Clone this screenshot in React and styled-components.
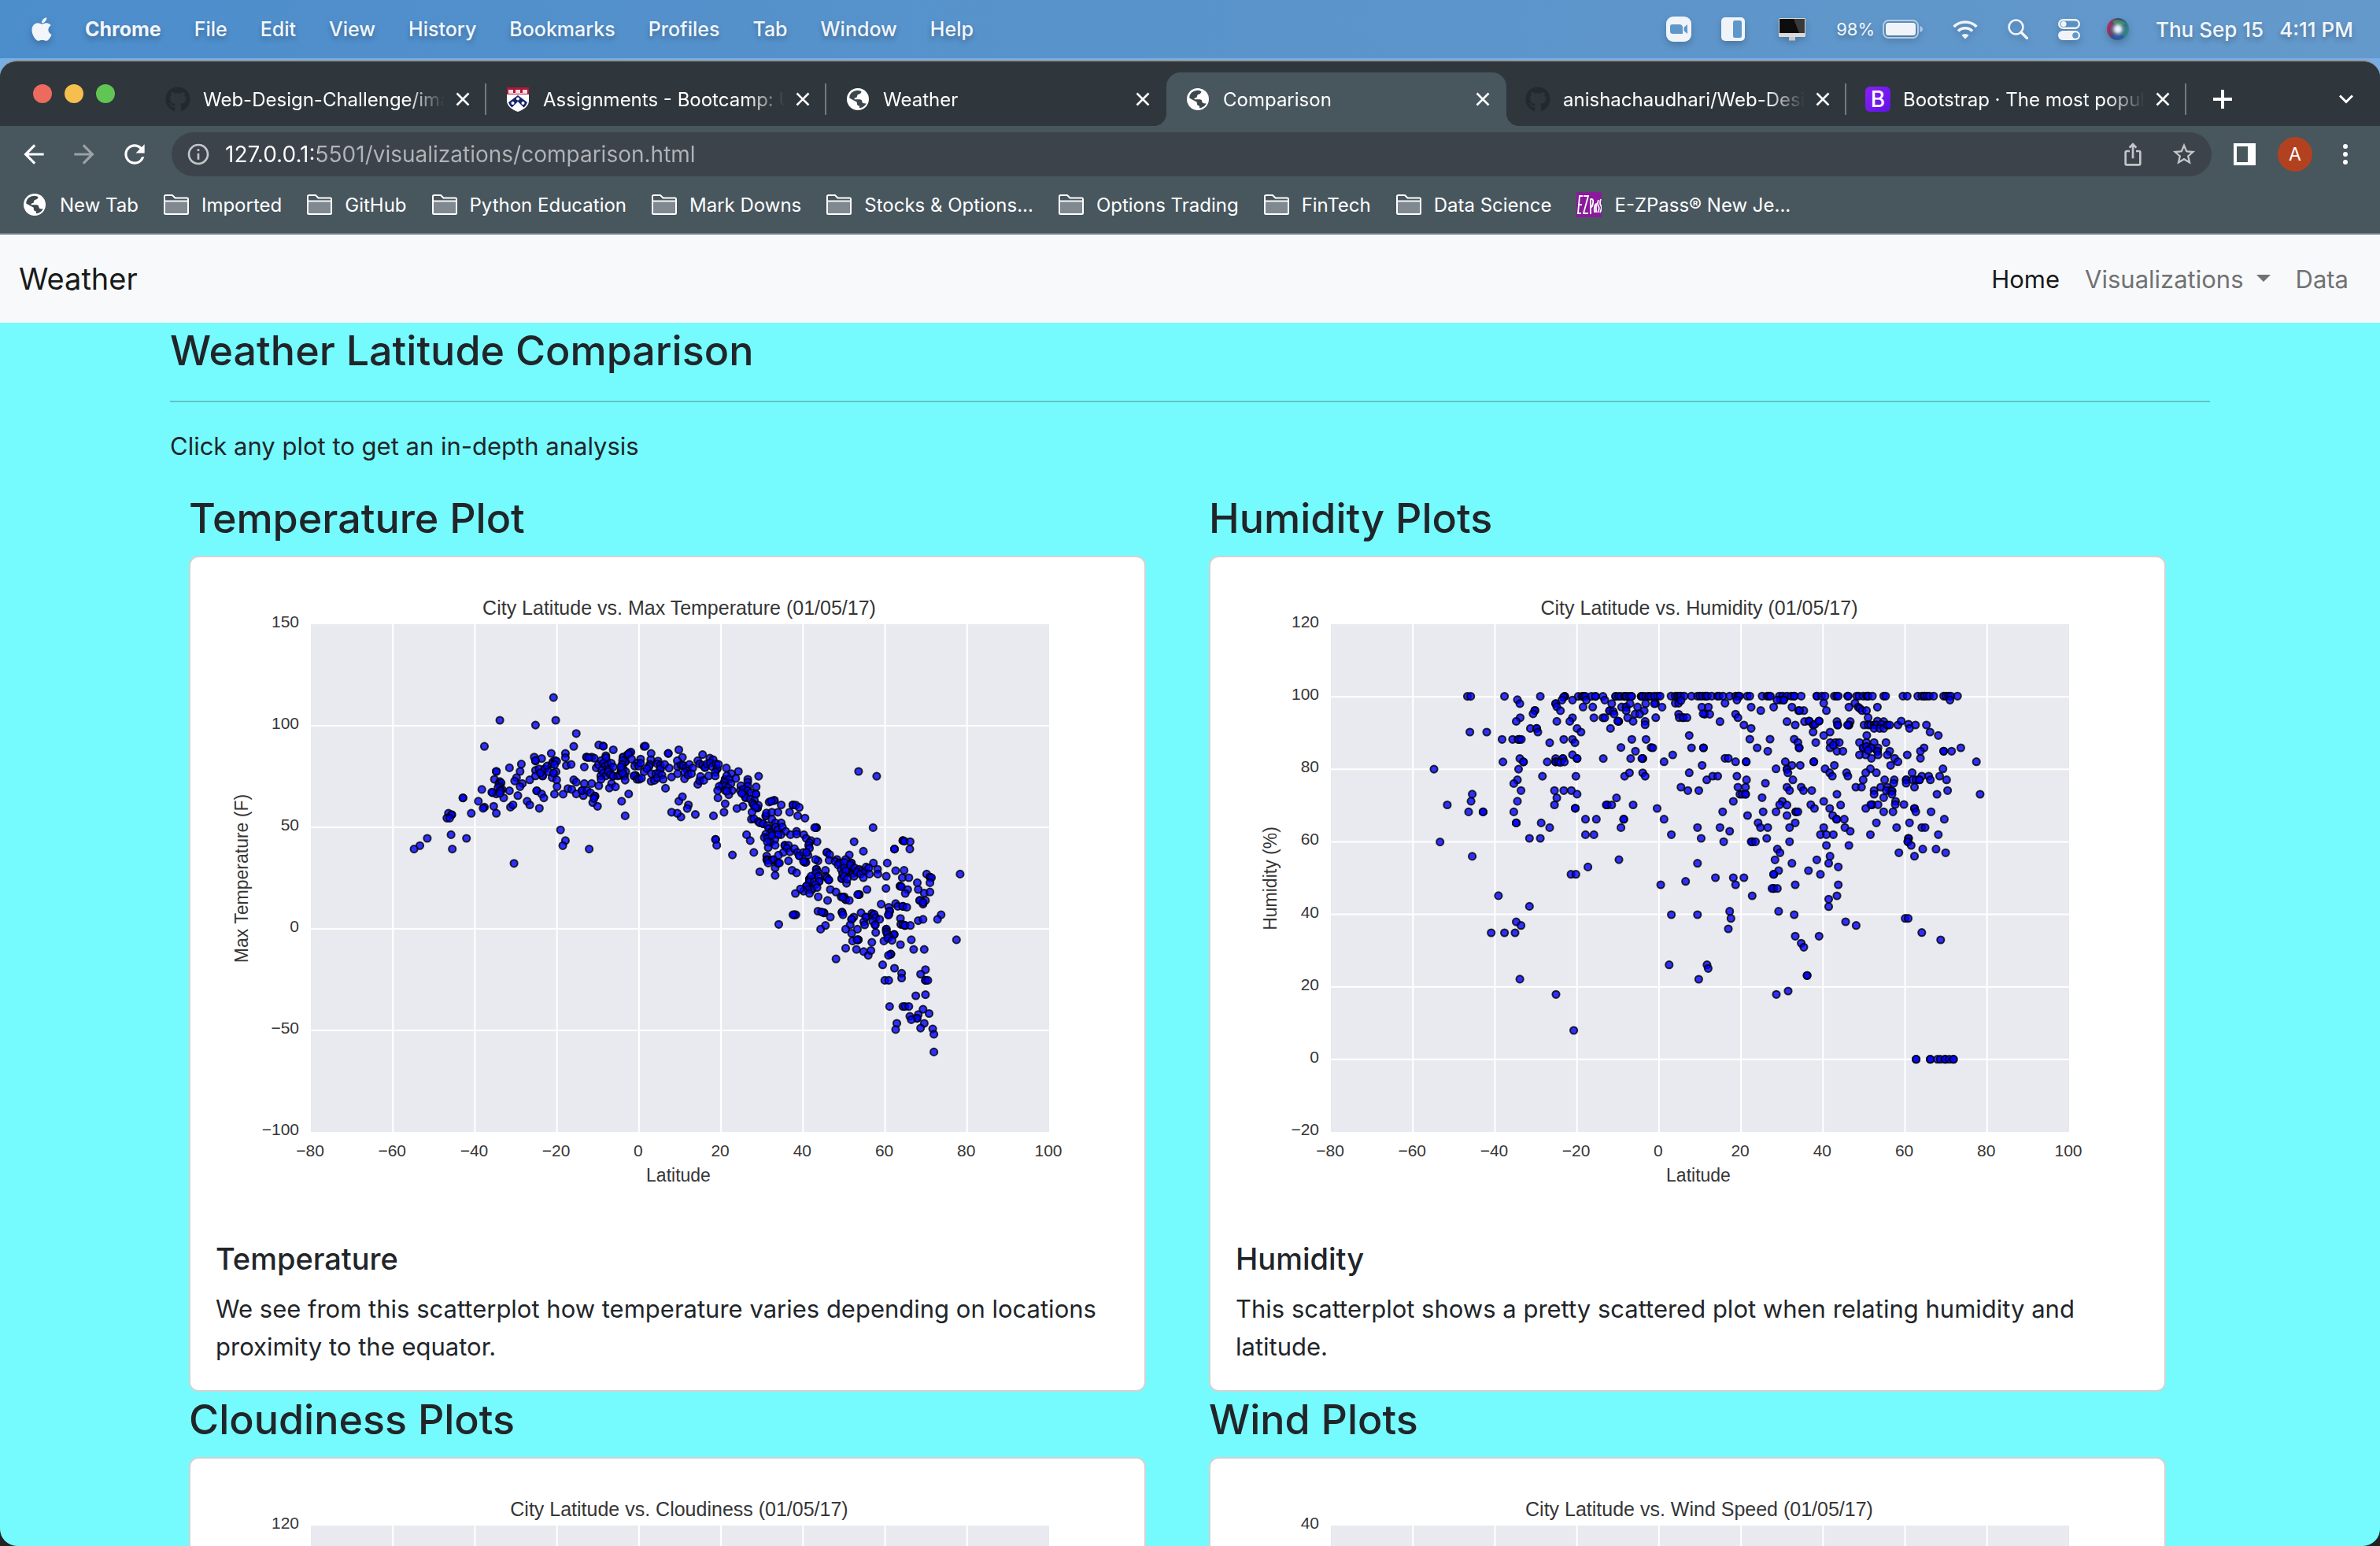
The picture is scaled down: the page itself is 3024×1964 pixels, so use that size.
import React from "react";
import styled, { createGlobalStyle, css } from "styled-components";
import { FaApple, FaGithub } from "react-icons/fa";
import {
  MdArrowBack,
  MdArrowForward,
  MdInfoOutline,
  MdIosShare,
  MdRefresh,
  MdStarBorder,
} from "react-icons/md";

const GlobalStyle = createGlobalStyle`
  *, *::before, *::after { box-sizing: border-box; }
  html, body, #root { height: 100%; }
  body {
    margin: 0;
    background: #222;
    font-family: Inter, "Noto Sans", sans-serif;
    overflow: hidden;
  }
  button, input { font: inherit; color: inherit; }
  button { border: 0; padding: 0; background: none; cursor: pointer; }
  a { color: inherit; text-decoration: none; }
  h1, h2, h3, p { margin: 0; }
  svg { display: block; flex: none; }
`;

/* ---------- Scatter plot data ---------- */

// Each block lists "x,y" marks on its own grid; `origin` and `scale` map
// the grid to chart units. A trailing "*" is a mark plotted twice.
const temperatureBlocks = [
  {
    origin: [-2, -8],
    scale: [2.45, 2.8],
    marks: `1135,521 968,602 1142,602 1079,619 1206,649 920,695 1198,695 1276,690 1290,694* 1321,707 1417,695
      1128,720 1172,720 1172,735 1075,733 1098,738 1079,747 1035,758 998,771 957,784* 951,812 1031,784 1020,806 1014,818
      1038,827 1031,838 1061,814 912,848 998,853 1024,870 980,878 1053,890 1061,903 1083,853* 1098,864 1105,878 1091,915
      1001,911 1009,903 957,933 949,908 920,911 916,915 901,890 879,933 853,878* 808,933 818,938* 803,950 812,950 816,1009
      864,1022 820,1060 742,1022 719,1048 701,1060 1012,1111 968,820 965,828 972,825 968,838 962,842 975,848 945,860
      957,864 970,853* 968,862 943,858 1079,745 1079,780 1079,800 1090,775 1108,775* 1101,800* 1094,790 1115,765 1120,785
      1130,758 1133,750 1140,745 1145,748 1138,760 1143,785 1131,806 1145,814 1135,790 1146,838 1138,865 1165,865 1180,845
      1192,848 1206,864 1198,814 1206,822 1231,827 1254,827 1228,870 1224,852* 1240,852 1250,860 1264,872* 1257,895
      1272,908 1276,835 1261,880 1238,733* 1254,733 1231,768 1175,763 1190,759 1262,737 1245,735 1268,771 1275,760
      1284,745 1298,728 1300,745 1298,735 1290,755 1296,765 1305,760 1309,775 1315,755 1321,768 1285,780 1282,800
      1290,790 1298,800 1283,812 1305,785 1312,795 1320,800* 1335,800 1345,785 1342,798 1316,827 1309,843 1328,839
      1352,733* 1358,750* 1365,725 1372,718 1376,715 1368,722 1350,745 1348,760 1352,775 1346,780 1360,785 1355,800*
      1358,815 1350,790 1345,768 1378,740 1406,740 1395,755 1388,765 1400,765 1406,755 1390,798* 1385,800 1395,812
      1402,812 1409,808 1417,785 1369,864 1347,890 1358,942 1157,992 1172,1030 1164,1048 1246,1060`,
  },
  {
    origin: [578, 132],
    scale: [2.6133, 2.8],
    marks: `0,302 19,328 18,350 15,367 12,375 5,382 20,400 19,427 30,424 35,400 42,355 40,365 50,370 50,383* 45,400 40,415
      55,405 59,420 64,367 79,380 87,412 67,452 76,328* 111,315 123,342 106,354 107,375 107,400 118,370 126,371* 135,380
      140,388 146,367 157,380 130,395 130,418 142,405 153,400 174,438 180,425 183,410 194,424 210,408 190,332 174,354
      180,365 190,370 198,378* 205,365 214,345 225,350 215,362 222,375 235,365 238,383* 243,367 232,395 232,408 269,380
      309,392 376,409 286,400 300,417 265,420* 270,408 278,420 284,435 262,430 255,440 265,445 275,450 245,445 240,460
      241,486 265,460 288,460 277,475 270,462 317,443 340,420 340,430 340,445 315,460 325,455 340,460 350,468 368,447
      367,473* 328,475 333,485* 320,470 348,490 362,495 356,505 372,522* 375,512 360,512 365,520 324,516 304,524 265,507
      261,537 226,550 166,545 118,554 106,541 87,537 111,498 123,482 143,511 139,524 354,537 352,562 360,560 375,570
      380,575 391,578* 400,550* 402,540 420,537 440,537 428,495* 411,501 418,498 451,511 490,511* 500,512 511,520 479,537
      506,550 530,558 420,562 432,575 451,575 405,585 410,595 420,605* 432,590 440,600 455,590 466,605 450,617 440,617
      415,612 400,615 395,627 405,630 430,635 420,620 415,645 405,643 408,663 431,655 482,617 502,605 502,615 526,617
      534,630 550,638 570,642 545,645 542,655 545,665 463,655* 475,655 470,665 458,680 480,678 495,667 505,680 511,692*
      525,680 540,690 535,680 530,715* 533,715 525,712 360,680 348,638 336,617 289,689 233,634* 237,655 380,749 431,762
      431,735 403,693 403,705 405,708* 420,708 426,705 440,718* 445,718 442,690 408,718 475,710 487,744 502,753 568,592*
      562,592 603,680* 612,688 610,708 573,710 565,705 598,744 568,740* 572,750 565,755 575,765 598,765 603,770 609,778*
      545,775* 550,765 545,785* 560,785 577,783* 565,795 553,812* 535,800* 540,812 525,818 515,810 498,826 545,826
      570,805 574,838 614,812 633,821 605,851 650,838 660,838 665,848* 677,851 655,840 710,830* 705,830 736,812 573,889
      593,895* 585,892 614,910 598,940 582,953 495,902* 500,902 490,902 443,936 653,893* 656,902 716,895 692,910 685,918*
      680,938 665,953 704,953 685,968 688,995 707,991* 703,991 665,1021 701,1025 725,1033 740,1046 749,1029 752,1000
      633,1059 732,910* 725,927 728,938 752,897 755,905 760,900 765,912 778,918 755,925 763,938* 765,965 783,864 808,875
      808,900* 811,889* 807,903 831,862 838,872 855,872* 868,875 847,915 848,936 855,937 862,940* 880,940 906,923 922,918
      982,902 970,918 800,953* 800,962 803,970 826,972* 810,980 792,995 805,985 819,993 847,1008 883,991 891,1025
      926,1025 1033,991 1045,757 708,392 768,409 756,592 693,642 724,676 677,689 827,668* 855,638* 860,640 879,642
      878,668 803,718 757,718 636,705 630,712 645,718* 640,725 665,705 660,715 684,718* 680,725 650,740 660,735 672,748*
      655,755 665,745 652,773* 660,765 668,790 670,775 690,755 693,765 700,745* 695,735 710,740 703,750 720,745 715,757
      724,770 730,745 733,732 742,735 744,757 771,740 772,757 800,765 831,745 859,744 853,770 875,770 934,757 945,768*
      950,770 945,788 903,788 906,812 926,825 945,821 930,851 911,851* 922,864 922,858 846,800* 850,802 871,812 863,826
      799,808 815,1042* 807,1046 788,1080 827,1092 851,1110 851,1127 930,1097 914,1113 930,1135* 938,1135 795,1135
      808,1135 898,1190 930,1186 811,1228 855,1228 862,1228 875,1228 922,1238 942,1253 878,1263 906,1257 902,1270*
      883,1275 926,1288 914,1305 835,1288 831,1310 954,1308 958,1327 958,1390`,
  },
];

const humidityBlocks = [
  {
    origin: [2, -8],
    scale: [2.6133, 2.8],
    marks: `848,517 859,517 971,517 1090,517 1171,517* 1167,520 1162,530 1197,530 1216,517 1228,517 1234,517* 1240,517
      1243,530 1260,517 1273,517* 1298,517 1304,530 1340,517* 1350,517 1358,517 1370,517* 1375,517* 1385,517 1393,517*
      1425,517* 1430,517* 1440,517 1450,517* 1458,517 1014,529 1022,543 1072,567* 1066,579 1141,543* 1145,554 1157,568
      1232,555 1264,555 1327,543 1320,568* 1332,570 1335,580 1360,555 1375,555* 1388,543 1375,568 1413,555 1435,568
      1440,543 1405,580 1420,580 1268,593 1298,593 1304,593 1197,593 1188,606 1145,606 1023,593 1010,606 1350,606*
      1347,605 1380,593 1398,606 1438,606 1438,618 1323,631 1057,631 1078,631* 1082,644 1212,631 1225,644 856,644 912,644
      963,670 998,670 1020,670* 1016,670 1027,670 1121,682 1168,670 1197,670 1205,682 1394,670 1441,670 1358,699 1406,712
      1458,699 1390,738 1430,738* 1427,738 1299,738 1197,725 1212,738* 1141,738 1165,738* 1113,750 1141,750* 1150,750
      1157,752 1170,750 966,750 1022,738 1034,750* 1018,776 737,776 1097,801 1208,801 1370,801 1386,789 1430,789 1438,801
      1014,814 1002,827 1026,852 1014,890 1137,852 1168,852 1193,852 1212,865 1145,878 1137,903 864,865 860,890 852,928
      900,928* 781,903 1002,928 1010,967* 1093,967 1121,984 1206,915* 1240,954 1276,954 1240,1009 1268,1009 1312,903*
      1309,903 1327,903 1343,878 1398,903 1367,954* 1358,984 1054,1022 1090,1022 757,1035 864,1086 1351,1098 1248,1124
      1192,1150 1208,1150 951,1226 1054,1264 1010,1319 1026,1332 927,1358 971,1358 1006,1358 1022,1523`,
  },
  {
    origin: [562, 112],
    scale: [2.3758, 3],
    marks: `5,193 15,193 22,193 55,193 68,193 75,193 80,193 85,193 95,193 117,193 135,193 142,193 150,193 160,193* 165,193
      178,193 195,193 200,193 212,193 232,193 250,193 258,193* 262,193 285,193 293,193 330,193 345,193 350,193 355,193
      382,193 392,193 405,193 418,193 427,193* 448,193 495,193* 510,193 520,193 548,193 555,193 560,193 588,193 590,193
      615,193 622,193 635,193 645,193 650,193* 663,193 697,193 703,193 755,193 768,193 800,193 812,193 820,193* 828,193
      835,193 848,193 878,193 885,193 893,193 900,193 920,193 8,220 5,222 28,235 68,220 78,220 85,210 254,208 218,220
      385,208 395,208* 375,208 516,220 524,248 610,220 592,235 620,235 625,240 632,248 645,248 678,235 897,208 650,275
      148,235 168,235 157,262 172,262 152,260 78,262 80,275 92,275* 103,275 9,275 203,290 250,262 257,275 275,303 297,316
      297,235 326,248 365,235 420,235 440,248 456,248 443,248 405,290 430,303 458,290 472,288* 485,303* 490,300 502,288*
      484,330 556,290 558,303* 596,290 592,303* 588,303 535,330 516,343 678,288 697,290 638,303 650,303 658,303 668,303
      675,303* 690,300 668,316 685,316 697,316 708,303* 715,303 740,303 750,288 772,300 793,303 775,316 826,303 837,330
      862,343 110,343 293,357 354,357 427,357 438,370 442,390* 492,370 536,370 552,370 563,370 535,390 545,380 556,403
      574,403 646,343 624,370 645,370 668,370 704,370 635,390* 645,385 660,390* 680,390 678,403* 624,417 643,417 650,400
      680,417 660,430 715,403 708,417 730,430 740,443 718,457 768,417 819,390 808,403 808,430 878,403* 902,403 930,390
      977,443 988,567 0,390 117,390 153,390* 60,417 34,443 315,390 347,403 218,430 228,430 250,443 282,443* 149,457
      110,485 372,470 400,443 420,457 445,457 405,472* 408,485 423,512 486,443* 520,470 534,485 542,498 548,457 585,485
      589,498 657,470 643,485 675,485 876,470 783,485 866,498 887,512 812,498 833,498 838,512 765,512* 765,525 785,512
      795,512 805,512* 790,540 840,634 858,567 890,553 163,512 181,498 196,498 254,498 283,512 340,525 85,540 106,553
      139,553 257,540 280,540 263,567 270,567 280,567* 243,594 330,580 405,540 413,553 448,540 455,553 480,553 556,567
      516,594 567,608 635,512 613,540 630,540 700,512 729,512 727,525 688,540 668,553 668,567 708,540 715,553 705,553
      722,555* 697,580 722,567 733,594 732,606 758,606 391,594 383,607 405,608 477,607 488,621 534,621 543,648 555,662*
      578,662 580,694 596,708 662,607* 658,607 680,607 643,621 697,634 725,634 790,621* 794,634 880,662 675,676 736,694
      775,676 812,694 822,694 862,721 13,621 34,662 211,634 286,648 333,634 372,634 405,648 432,634* 438,634 318,676
      325,694 347,694 413,694 430,676 135,694 203,694 232,708 56,721 146,735 214,748 300,748* 297,748 310,748 344,735
      413,748 516,694 506,721 524,721 545,721 524,762 592,762 657,721 772,735* 770,748* 780,762 743,790 790,803 815,776
      855,776 884,790 376,776 384,790 369,817 420,830 495,817 535,803 531,830 560,844 470,858 506,872 380,858 365,872*
      135,830 99,899 189,885 243,885 275,885 250,912 24,912 300,954 365,926* 360,926 376,926 430,912 560,912 556,954
      531,967 531,995 232,1013 236,1040 228,1080 56,1026 135,1026 380,1013 427,1026 582,1053 614,1067 762,1040 771,1040
      812,1094 869,1122 430,1108 502,1108 448,1135 456,1150`,
  },
  {
    origin: [62, 392],
    scale: [1.3288, 3],
    marks: `692,377 756,377 758,391 742,432 925,418* 501,490 893,477 873,490 531,627 1109,737* 1133,737* 1145,737 1150,737
      1158,737* 1165,737 1172,737*`,
  },
];

function readMarks(blocks) {
  return blocks.flatMap(({ origin, scale, marks }) =>
    marks.trim().split(/\s+/).flatMap((mark) => {
      const [x, y] = mark.replace("*", "").split(",").map(Number);
      const point = [
        Math.round((x / scale[0] + origin[0]) * 10) / 10,
        Math.round((y / scale[1] + origin[1]) * 10) / 10,
      ];
      return mark.endsWith("*") ? [point, point] : [point];
    })
  );
}

const axis = { left: 153, right: 1091, top: 85, bottom: 730 };
const latitudes = [-80, -60, -40, -20, 0, 20, 40, 60, 80, 100];
const signed = (n) => String(n).replace("-", "−");

const plots = [
  {
    heading: "Temperature Plot",
    chart: "City Latitude vs. Max Temperature (01/05/17)",
    yLabel: "Max Temperature (F)",
    yLabelX: 73,
    range: [-100, 150],
    step: 50,
    points: readMarks(temperatureBlocks),
    title: "Temperature",
    text: "We see from this scatterplot how temperature varies depending on locations proximity to the equator.",
  },
  {
    heading: "Humidity Plots",
    chart: "City Latitude vs. Humidity (01/05/17)",
    yLabel: "Humidity (%)",
    yLabelX: 84,
    range: [-20, 120],
    step: 20,
    points: readMarks(humidityBlocks),
    title: "Humidity",
    text: "This scatterplot shows a pretty scattered plot when relating humidity and latitude.",
  },
  {
    heading: "Cloudiness Plots",
    chart: "City Latitude vs. Cloudiness (01/05/17)",
    range: [-20, 120],
    step: 20,
    points: [],
  },
  {
    heading: "Wind Plots",
    chart: "City Latitude vs. Wind Speed (01/05/17)",
    range: [-5, 40],
    step: 5,
    points: [],
  },
];

/* ---------- Menu bar ---------- */

const Desktop = styled.div`
  display: flex;
  flex-direction: column;
  height: 100vh;
  background: linear-gradient(#79aee4 0 200px, #222 200px);
`;

const MenuBar = styled.header`
  display: flex;
  align-items: center;
  justify-content: space-between;
  flex: none;
  height: 74px;
  padding: 0 34px 0 40px;
  background: linear-gradient(90deg, #4c8dcc, #5893cb 45%, #6499cb);
  color: #f2f6fa;
  font-size: 25px;
  white-space: nowrap;
  text-shadow: 0 4px 6px rgba(0, 0, 0, 0.25);

  svg {
    filter: drop-shadow(0 4px 4px rgba(0, 0, 0, 0.2));
  }
`;

const MenuGroup = styled.div`
  display: flex;
  align-items: center;
  gap: ${(p) => p.$gap}px;
`;

const MenuItem = styled.button`
  font-weight: ${(p) => (p.$bold ? 700 : 500)};
  text-shadow: inherit;
`;

const AppleLogo = styled(FaApple)`
  width: 26px;
  height: 34px;
`;

const Clock = styled.button`
  display: flex;
  gap: 20px;
  font-size: 26px;
  font-weight: 500;
  text-shadow: inherit;
`;

const BatteryText = styled.span`
  font-size: 22px;
`;

const menus = ["File", "Edit", "View", "History", "Bookmarks", "Profiles", "Tab", "Window", "Help"];

const ZoomIcon = () => (
  <svg width="32" height="32" viewBox="0 0 32 32">
    <rect width="32" height="32" rx="9" fill="#f0f4f9" />
    <path d="M5 12.500a2.500 2.500 0 0 1 2.500-2.500h10a4 4 0 0 1 3.500 4v8h-12.500a3.500 3.500 0 0 1-3.500-3.500zM22.500 14l4.500-4v12l-4.500-4z" fill="#5f97cb" />
  </svg>
);

const SidebarIcon = () => (
  <svg width="30" height="30" viewBox="0 0 30 30">
    <rect width="30" height="30" rx="5" fill="#f0f4f9" />
    <rect x="15" y="4" width="11" height="22" rx="2.500" fill="#5f97cb" />
  </svg>
);

const DisplayIcon = () => (
  <svg width="40" height="30" viewBox="0 0 40 30">
    <rect x="5" y="1" width="34" height="24" rx="1.500" fill="#d9d9db" />
    <rect x="6" y="2" width="32" height="18" fill="#0d0d0d" />
    <path d="M24 2h14v18h-7z" fill="#3a3a3a" />
    <path d="M18 25h8v4.500h-8z" fill="#c9c9cc" />
  </svg>
);

const BatteryIcon = () => (
  <svg width="51" height="24" viewBox="0 0 51 24">
    <rect x="1" y="1" width="44" height="22" rx="6.500" fill="none" stroke="#b4cbe3" strokeWidth="2" />
    <rect x="4" y="4" width="38" height="16" rx="3.500" fill="#f0f4f9" />
    <path d="M47.500 8c2.500 1 3.500 2.500 3.500 4s-1 3-3.500 4z" fill="#b4cbe3" />
  </svg>
);

const WifiIcon = () => (
  <svg width="32" height="25" viewBox="0 0 32 25" fill="none" stroke="#f0f4f9" strokeWidth="3.600">
    <path d="M1.500 9a20.500 20.500 0 0 1 29 0" />
    <path d="M7 14.500a12.800 12.800 0 0 1 18 0" />
    <path d="M16 24.500l-4.600-4.700a6.500 6.500 0 0 1 9.200 0z" fill="#f0f4f9" stroke="none" />
  </svg>
);

const SearchIcon = () => (
  <svg width="26" height="26" viewBox="0 0 26 26" fill="none" stroke="#f0f4f9" strokeWidth="2.600">
    <circle cx="10.500" cy="10.500" r="9" />
    <path d="M17 17l7.500 7.500" strokeWidth="3.400" strokeLinecap="round" />
  </svg>
);

const ControlIcon = () => (
  <svg width="28" height="27" viewBox="0 0 28 27">
    <rect x="1.200" y="1.200" width="25.600" height="10.600" rx="5.300" fill="none" stroke="#f0f4f9" strokeWidth="2.400" />
    <circle cx="7" cy="6.500" r="3.600" fill="#f0f4f9" />
    <rect y="15" width="28" height="12" rx="6" fill="#f0f4f9" />
    <circle cx="22" cy="21" r="3.800" fill="#5f97cb" />
  </svg>
);

const SiriIcon = () => (
  <svg width="28" height="28" viewBox="0 0 28 28">
    <defs>
      <radialGradient id="siriGlow">
        <stop offset="0" stopColor="#fff" />
        <stop offset="0.350" stopColor="#e6eef8" stopOpacity="0.850" />
        <stop offset="1" stopColor="#3b5f92" stopOpacity="0" />
      </radialGradient>
      <linearGradient id="siriBall" x1="0" x2="1" y1="0.300" y2="0.600">
        <stop offset="0" stopColor="#c02a5c" />
        <stop offset="0.450" stopColor="#3d4a70" />
        <stop offset="1" stopColor="#2a8f8c" />
      </linearGradient>
    </defs>
    <circle cx="14" cy="14" r="14" fill="url(#siriBall)" />
    <path d="M7 4a14 14 0 0 1 17 3q-6 2-10 6z" fill="#3c8f5f" />
    <path d="M6 24q8-6 16 0a14 14 0 0 1-16 0z" fill="#2b55b0" />
    <circle cx="14" cy="14" r="11" fill="url(#siriGlow)" />
  </svg>
);

/* ---------- Browser window ---------- */

const BrowserWindow = styled.div`
  display: flex;
  flex-direction: column;
  flex: 1;
  min-height: 0;
  margin-top: 2px;
  border-top: 2px solid #8f979c;
  border-radius: 22px;
  overflow: hidden;
  background: #48565e;
  color: #fff;
`;

const TabStrip = styled.div`
  display: flex;
  align-items: flex-end;
  flex: none;
  height: 82px;
  padding-right: 34px;
  background: #2f363c;
`;

const WindowControls = styled.div`
  display: flex;
  align-items: center;
  flex: none;
  gap: 16px;
  width: 186px;
  height: 100%;
  padding-left: 42px;
`;

const ControlDot = styled.button`
  width: 24px;
  height: 24px;
  border-radius: 50%;
  background: ${(p) => p.$color};
`;

const flare = css`
  content: "";
  position: absolute;
  bottom: 0;
  width: 16px;
  height: 16px;
`;

const Tab = styled.div`
  position: relative;
  display: flex;
  align-items: center;
  flex: 0 1 432px;
  min-width: 0;
  height: 68px;
  padding-left: 24px;
  font-size: 24px;

  ${(p) =>
    p.$active &&
    css`
      border-radius: 18px 18px 0 0;
      background: #48565e;

      &::before {
        ${flare}
        right: 100%;
        background: radial-gradient(circle at 0 0, transparent 16px, #48565e 16px);
      }

      &::after {
        ${flare}
        left: 100%;
        background: radial-gradient(circle at 100% 0, transparent 16px, #48565e 16px);
      }
    `}
`;

const TabLink = styled.a`
  display: flex;
  align-items: center;
  flex: 1;
  gap: 16px;
  min-width: 0;
`;

const TabTitle = styled.span`
  flex: 1;
  overflow: hidden;
  white-space: nowrap;
  mask-image: linear-gradient(90deg, #000 calc(100% - 48px), transparent);
`;

const CloseButton = styled.button`
  flex: none;
  margin: 0 19px 0 14px;
`;

const TabDivider = styled.span`
  flex: none;
  width: 2px;
  height: 40px;
  background: ${(p) => (p.$hidden ? "transparent" : "#727a7f")};
`;

const StripButton = styled.button`
  display: flex;
  align-items: center;
  flex: none;
  height: 68px;
  margin-left: ${(p) => (p.$end ? "auto" : "34px")};
`;

const IconBox = styled.span`
  display: flex;
  align-items: center;
  justify-content: center;
  flex: none;
  width: 32px;
  height: 32px;
`;

const BootstrapMark = styled(IconBox)`
  border-radius: 6px;
  background: linear-gradient(135deg, #8a1ff8, #5f14e4);
  font-size: 28px;
  font-weight: 500;
`;

const CloseIcon = () => (
  <svg width="18" height="18" viewBox="0 0 18 18" stroke="#fff" strokeWidth="2.600">
    <path d="M1.500 1.500l15 15M16.500 1.500l-15 15" />
  </svg>
);

const GithubMark = () => (
  <IconBox>
    <FaGithub size={32} color="#23292e" />
  </IconBox>
);

const GlobeMark = () => (
  <IconBox>
    <svg width="28" height="28" viewBox="0 0 28 28">
      <circle cx="14" cy="14" r="14" fill="#fff" />
      <path
        d="M13.500 2.800q3 .2 5 1.300-.300 3.400-3.500 3.600-2 .2-2 2.600 0 2-2.300 2-1.500.2-1.200 2h7.500q2.400.3 2.400 3 .2 2 2 2l3.300.2q-2.800 5.300-8.700 5.800v-2.800q-3.200-.3-3.200-3.200v-1.600l-9.600-5.300q.2-8.400 10.300-9.600z"
        fill="#3c474e"
      />
      <path d="M3 13q.3 9 8.300 12.100v-3.600q-2.300-.6-2.300-3z" fill="#fff" />
    </svg>
  </IconBox>
);

const CrestMark = () => (
  <IconBox>
    <svg width="28" height="31" viewBox="0 0 28 31">
      <path d="M0 0h28v17c0 7-7 11.500-14 14C7 28.500 0 24 0 17z" fill="#fff" />
      <path d="M0 0h28v9H0z" fill="#b0173a" />
      <path d="M2 3h6v4h3V3h6v4h3V3h6v5H2z" fill="#f5dfe4" />
      <path d="M14 10l12 9c-1 3-2.500 5-4.500 6.500L14 18l-7.500 7.500C4.500 24 3 22 2 19z" fill="#16246b" />
      <circle cx="14" cy="14.500" r="2" fill="#fff" />
      <circle cx="7.500" cy="20" r="2" fill="#fff" />
      <circle cx="20.500" cy="20" r="2" fill="#fff" />
    </svg>
  </IconBox>
);

const FolderMark = () => (
  <IconBox>
    <svg width="32" height="26" viewBox="0 0 32 26">
      <path d="M1 24V2.500Q1 1 2.500 1H11l3.500 3.500H29.500Q31 4.500 31 6v17.500Q31 25 29.500 25h-27Q1 25 1 24z" fill="#48565e" stroke="#fff" strokeWidth="2" />
      <path d="M2 9.500h28V24H2z" fill="#808890" />
      <path d="M1 8.500h30" stroke="#fff" strokeWidth="2" />
    </svg>
  </IconBox>
);

const EzPassMark = () => (
  <IconBox>
    <svg width="32" height="32" viewBox="0 0 32 32">
      <rect width="32" height="32" fill="#8a1a9b" />
      <path
        d="M8 5H4L2 27h4M3 16h4M9 5h6L9 27h6M18 28V9q4-1 3 5t-3 5M23 26q-1-10 2-11v11M28 10q-2 5 0 8t-1 8M31 9q-2 6 0 8t-1 9"
        fill="none"
        stroke="#fff"
        strokeWidth="1.800"
      />
    </svg>
  </IconBox>
);

const tabs = [
  { title: "Web-Design-Challenge/images", mark: <GithubMark /> },
  { title: "Assignments - Bootcamp: U", mark: <CrestMark /> },
  { title: "Weather", mark: <GlobeMark />, plain: true },
  { title: "Comparison", mark: <GlobeMark />, plain: true, active: true },
  { title: "anishachaudhari/Web-Design", mark: <GithubMark /> },
  { title: "Bootstrap · The most popular", mark: <BootstrapMark>B</BootstrapMark> },
];

const Toolbar = styled.div`
  display: flex;
  align-items: center;
  flex: none;
  gap: 28px;
  height: 72px;
  padding: 0 30px 0 24px;
`;

const NavButtons = styled.div`
  display: flex;
  align-items: center;
  gap: 26px;
`;

const ToolButton = styled.button`
  display: flex;
  justify-content: center;
  flex: none;
  min-width: 28px;
  opacity: ${(p) => (p.disabled ? 0.45 : 1)};
`;

const AddressBar = styled.form`
  display: flex;
  align-items: center;
  flex: 1;
  min-width: 0;
  height: 56px;
  padding: 0 18px;
  border-radius: 28px;
  background: #3d434a;
  color: #c3c6c9;
`;

const AddressInput = styled.input`
  flex: 1;
  min-width: 0;
  margin: 0 18px;
  padding: 0;
  border: 0;
  outline: 0;
  background: linear-gradient(90deg, #fff 118px, #b1b4b7 118px);
  background-clip: text;
  -webkit-background-clip: text;
  color: transparent;
  font-size: 28px;
`;

const AddressActions = styled.div`
  display: flex;
  align-items: center;
  gap: 32px;
`;

const Avatar = styled.button`
  flex: none;
  width: 44px;
  height: 44px;
  border-radius: 50%;
  background: #b2421f;
  font-size: 23px;
`;

const BookmarksBar = styled.nav`
  display: flex;
  align-items: center;
  flex: none;
  gap: 32px;
  height: 66px;
  padding: 0 28px 8px;
  border-bottom: 2px solid #737e84;
  font-size: 24px;
  white-space: nowrap;
`;

const Bookmark = styled.a`
  display: flex;
  align-items: center;
  gap: 16px;
`;

const bookmarks = [
  { title: "New Tab", mark: <GlobeMark /> },
  { title: "Imported" },
  { title: "GitHub" },
  { title: "Python Education" },
  { title: "Mark Downs" },
  { title: "Stocks & Options..." },
  { title: "Options Trading" },
  { title: "FinTech" },
  { title: "Data Science" },
  { title: "E-ZPass® New Je...", mark: <EzPassMark /> },
];

/* ---------- Web page ---------- */

const Page = styled.div`
  flex: 1;
  min-height: 0;
  overflow: hidden;
  background: #75fbfd;
  color: #212529;
`;

const Navbar = styled.nav`
  display: flex;
  align-items: center;
  justify-content: space-between;
  height: 112px;
  padding: 0 24px;
  background: #f8f9fb;
`;

const Brand = styled.a`
  color: #1a1a1a;
  font-size: 38px;
`;

const NavLinks = styled.div`
  display: flex;
  align-items: center;
`;

const NavLink = styled.a`
  padding: 16px;
  color: ${(p) => (p.$current ? "#1a1a1a" : "#717273")};
  font-size: 31px;
`;

const Caret = styled.span`
  display: inline-block;
  margin-left: 16px;
  vertical-align: 8px;
  border: 9px solid transparent;
  border-top-color: currentColor;
  border-bottom: 0;
`;

const Container = styled.main`
  width: 100%;
  max-width: 2640px;
  margin: 0 auto;
  padding: 0 24px;
`;

const Heading = styled.h2`
  margin-bottom: 14px;
  padding-top: 2px;
  font-size: 52px;
  font-weight: 500;
  line-height: 67px;
`;

const Rule = styled.hr`
  height: 2px;
  margin: 30px 0 32px;
  border: 0;
  background: #60c5c8;
`;

const Lead = styled.p`
  margin-bottom: 32px;
  font-size: 31px;
  line-height: 48px;
`;

const PlotGrid = styled.div`
  display: grid;
  grid-template-columns: 1fr 1fr;
`;

const PlotColumn = styled.section`
  padding: 0 24px;
`;

const Card = styled.article`
  max-width: 1216px;
  border: 2px solid #d0d3d4;
  border-radius: 12px;
  background: #fff;
  overflow: hidden;
`;

const CardBody = styled.div`
  padding: 34px 32px 31px;
`;

const CardTitle = styled.h3`
  margin-bottom: 16px;
  font-size: 38px;
  font-weight: 500;
  line-height: 48px;
`;

const CardText = styled.p`
  font-size: 31px;
  line-height: 48px;
`;

const ChartSvg = styled.svg`
  width: 100%;
  height: auto;
  font-family: "Liberation Sans", Arial, sans-serif;
  font-size: 23px;
  fill: #363636;

  .title {
    font-size: 25px;
  }

  .tick {
    font-size: 21px;
  }
`;

function ScatterPlot({ chart, yLabel, yLabelX, range, step, points }) {
  const [low, high] = range;
  const x = (lat) => axis.left + ((lat + 80) / 180) * (axis.right - axis.left);
  const y = (value) => axis.bottom - ((value - low) / (high - low)) * (axis.bottom - axis.top);
  const values = [];
  for (let v = high; v >= low; v -= step) values.push(v);
  const loaded = points.length > 0;
  const yTicks = loaded ? values : [high];

  return (
    <ChartSvg viewBox="0 0 1212 833" role="img" aria-label={chart}>
      <rect x={axis.left} y={axis.top} width={axis.right - axis.left} height={axis.bottom - axis.top} fill="#e9eaf0" />
      <g stroke="#fff" strokeWidth="2">
        {latitudes.slice(1, -1).map((lat) => (
          <path key={lat} d={`M${x(lat)} ${axis.top}V${axis.bottom}`} />
        ))}
        {values.slice(1, -1).map((v) => (
          <path key={v} d={`M${axis.left} ${y(v)}H${axis.right}`} />
        ))}
      </g>
      <g fill="#00f" fillOpacity="0.8" stroke="#000" strokeOpacity="0.8" strokeWidth="2">
        {points.map(([px, py], i) => (
          <circle key={i} cx={px} cy={py} r="4.600" />
        ))}
      </g>
      <text className="title" x="621" y="73" textAnchor="middle">{chart}</text>
      {yTicks.map((v) => (
        <text className="tick" key={v} x="138" y={y(v) + 4} textAnchor="end">{signed(v)}</text>
      ))}
      {loaded && (
        <g textAnchor="middle">
          {latitudes.map((lat) => (
            <text className="tick" key={lat} x={x(lat) - 1} y="761">{signed(lat)}</text>
          ))}
          <text x="620" y="793">Latitude</text>
          <text transform={`translate(${yLabelX} 408) rotate(-90)`}>{yLabel}</text>
        </g>
      )}
    </ChartSvg>
  );
}

function PlotCard({ plot }) {
  return (
    <PlotColumn>
      <Heading>{plot.heading}</Heading>
      <Card>
        <a href="#plot">
          <ScatterPlot {...plot} />
        </a>
        {plot.title && (
          <CardBody>
            <CardTitle>{plot.title}</CardTitle>
            <CardText>{plot.text}</CardText>
          </CardBody>
        )}
      </Card>
    </PlotColumn>
  );
}

function SystemMenu() {
  return (
    <MenuBar>
      <MenuGroup $gap={42}>
        <AppleLogo aria-label="Apple" />
        <MenuItem $bold>Chrome</MenuItem>
        {menus.map((name) => (
          <MenuItem key={name}>{name}</MenuItem>
        ))}
      </MenuGroup>
      <MenuGroup $gap={38}>
        <ZoomIcon />
        <SidebarIcon />
        <DisplayIcon />
        <MenuGroup $gap={10}>
          <BatteryText>98%</BatteryText>
          <BatteryIcon />
        </MenuGroup>
        <WifiIcon />
        <SearchIcon />
        <MenuGroup $gap={34}>
          <ControlIcon />
          <SiriIcon />
          <Clock>
            <span>Thu Sep 15</span>
            <span>4:11 PM</span>
          </Clock>
        </MenuGroup>
      </MenuGroup>
    </MenuBar>
  );
}

function BrowserChrome() {
  return (
    <>
      <TabStrip>
        <WindowControls>
          <ControlDot $color="#ed6a5e" aria-label="Close window" />
          <ControlDot $color="#f4bf4f" aria-label="Minimize window" />
          <ControlDot $color="#61c554" aria-label="Zoom window" />
        </WindowControls>
        {tabs.map((tab) => (
          <Tab key={tab.title} $active={tab.active}>
            <TabLink href="#tab">
              {tab.mark}
              <TabTitle>{tab.title}</TabTitle>
            </TabLink>
            <CloseButton aria-label={`Close ${tab.title}`}>
              <CloseIcon />
            </CloseButton>
            <TabDivider $hidden={tab.plain} />
          </Tab>
        ))}
        <StripButton aria-label="New tab">
          <svg width="24" height="24" viewBox="0 0 24 24" stroke="#fff" strokeWidth="4">
            <path d="M12 0v24M0 12h24" />
          </svg>
        </StripButton>
        <StripButton $end aria-label="Search tabs">
          <svg width="18" height="12" viewBox="0 0 18 12" fill="none" stroke="#fff" strokeWidth="3">
            <path d="M1 1.500l8 8 8-8" />
          </svg>
        </StripButton>
      </TabStrip>
      <Toolbar>
        <NavButtons>
          <ToolButton aria-label="Back"><MdArrowBack size={38} /></ToolButton>
          <ToolButton aria-label="Forward" disabled><MdArrowForward size={38} /></ToolButton>
          <ToolButton aria-label="Reload"><MdRefresh size={38} /></ToolButton>
        </NavButtons>
        <AddressBar>
          <MdInfoOutline size={32} />
          <AddressInput aria-label="Address" defaultValue="127.0.0.1:5501/visualizations/comparison.html" />
          <AddressActions>
            <ToolButton type="button" aria-label="Share"><MdIosShare size={32} /></ToolButton>
            <ToolButton type="button" aria-label="Bookmark this page"><MdStarBorder size={34} /></ToolButton>
          </AddressActions>
        </AddressBar>
        <ToolButton aria-label="Side panel">
          <svg width="28" height="28" viewBox="0 0 28 28">
            <path fillRule="evenodd" d="M0 0h28v28H0zM4 4v20h14V4z" fill="#fff" />
          </svg>
        </ToolButton>
        <Avatar aria-label="Profile">A</Avatar>
        <ToolButton aria-label="Menu">
          <svg width="6" height="28" viewBox="0 0 6 28" fill="#fff">
            <circle cx="3" cy="4" r="3" />
            <circle cx="3" cy="14" r="3" />
            <circle cx="3" cy="24" r="3" />
          </svg>
        </ToolButton>
      </Toolbar>
      <BookmarksBar>
        {bookmarks.map((b) => (
          <Bookmark key={b.title} href="#bookmark">
            {b.mark || <FolderMark />}
            {b.title}
          </Bookmark>
        ))}
      </BookmarksBar>
    </>
  );
}

export default function App() {
  return (
    <Desktop>
      <GlobalStyle />
      <SystemMenu />
      <BrowserWindow>
        <BrowserChrome />
        <Page>
          <Navbar>
            <Brand href="#home">Weather</Brand>
            <NavLinks>
              <NavLink href="#home" $current>Home</NavLink>
              <NavLink as="button">
                Visualizations
                <Caret />
              </NavLink>
              <NavLink href="#data">Data</NavLink>
            </NavLinks>
          </Navbar>
          <Container>
            <Heading>Weather Latitude Comparison</Heading>
            <Rule />
            <Lead>Click any plot to get an in-depth analysis</Lead>
            <PlotGrid>
              {plots.map((plot) => (
                <PlotCard key={plot.heading} plot={plot} />
              ))}
            </PlotGrid>
          </Container>
        </Page>
      </BrowserWindow>
    </Desktop>
  );
}
